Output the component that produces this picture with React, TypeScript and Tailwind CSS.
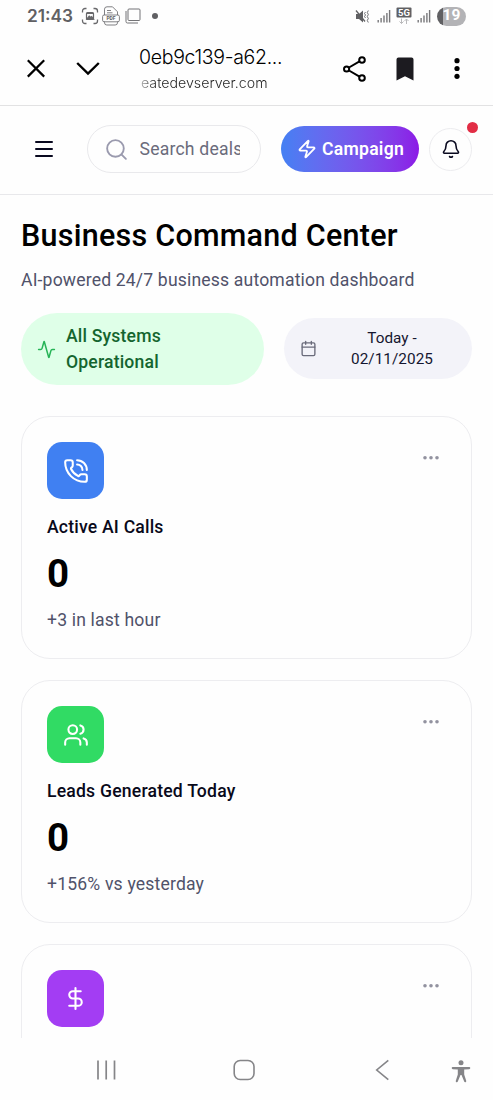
import type { ReactNode } from "react";
import { Activity, Bell, Calendar, DollarSign, Menu, PhoneCall, Search, Users, Zap } from "lucide-react";

type StatCardProps = {
    title?: string;
    value?: string;
    note?: string;
    color: string;
    icon: ReactNode;
};

function SignalBars() {
    return (
        <svg width="14" height="14" viewBox="0 0 14 14" stroke="#77777a" strokeWidth="1.4">
            <path d="M1.2 11v2.5M4.1 9v4.5M7 6.5v7M9.9 4v9.5M12.6 1v12.5" />
        </svg>
    );
}

function StatusBar() {
    return (
        <div className="flex h-8 shrink-0 items-center pl-[27px] pr-[27px] text-[#606063]">
            <span className="w-[46px] font-[Inter] text-[17.3px] font-semibold leading-none">21:43</span>
            <svg className="ml-2" width="18" height="18" viewBox="0 0 18 18" fill="none" stroke="#68686b" strokeWidth="1.3">
                <path d="M1.5 5.5V4a2.500 2.500 0 0 1 2.500-2.500h1.500M12.500 1.500H14A2.500 2.500 0 0 1 16.500 4v1.500M16.500 12.500V14a2.500 2.500 0 0 1-2.500 2.500h-1.500M5.500 16.500H4A2.500 2.500 0 0 1 1.500 14v-1.500" />
                <rect x="5.5" y="5.5" width="7" height="7" rx="1" strokeWidth="1.2" />
                <path d="M5.5 6.3h7M6 12l2.200-2.800 1.500 1.400 1-.9 1.800 2.300z" fill="#68686b" />
            </svg>
            <svg className="ml-[3px]" width="18" height="20" viewBox="0 0 18 20" fill="none" stroke="#737376" strokeWidth="0.9">
                <path d="M2.5 9V3.200A2.500 2.500 0 0 1 5 .8h5.500L15.500 5.800V9M2.500 15.500v1.200a2.300 2.300 0 0 0 2.300 2.300h8.400a2.300 2.300 0 0 0 2.300-2.300v-1.200M5 4.500h4M5 6.800h5.500" />
                <rect x="0.6" y="9" width="16.8" height="6.8" rx="1.5" />
                <text x="9" y="14.300" textAnchor="middle" fill="#606063" stroke="none" fontSize="5" fontWeight="700" fontFamily="Roboto">PDF</text>
            </svg>
            <svg className="ml-[5px]" width="16" height="16" viewBox="0 0 16 16" fill="none" stroke="#737376" strokeWidth="1">
                <rect x="3" y="1" width="12" height="11.500" rx="1" />
                <path d="M1 3v10.500a1.500 1.500 0 0 0 1.500 1.500H13" />
            </svg>
            <span className="ml-[11px] size-[5.500px] rounded-full bg-[#606063]" />
            <div className="ml-auto flex items-center">
                <svg width="15" height="15" viewBox="0 0 15 15" fill="none" stroke="#606063">
                    <path d="M1 5h3l4-3.500v12L4 10H1z" fill="#606063" stroke="none" />
                    <path d="M1 1.500l9 11" strokeWidth="1.300" />
                    <path d="M10.500 3l-1 1.500 1 1.500-1 1.500 1 1.500M13.300 1.500l-1 2 1 2-1 2 1 2-1 2 1 2" strokeWidth="0.900" />
                </svg>
                <div className="ml-[7px]"><SignalBars /></div>
                <svg className="ml-[5px]" width="16" height="18" viewBox="0 0 16 18">
                    <rect x="0.500" y="0.500" width="15" height="10" rx="1" fill="#606063" />
                    <text x="8" y="9" textAnchor="middle" fill="#fff" fontSize="9.500" fontWeight="700" fontFamily="Roboto">5G</text>
                    <path d="M5.500 11.500v5M3.500 14.500l2 2 2-2M10.500 17v-5M8.500 14l2-2 2 2" fill="none" stroke="#b9b9bb" />
                </svg>
                <div className="ml-[5px]"><SignalBars /></div>
                <div className="ml-[6px] flex h-[19px] w-[29px] items-center justify-center rounded-full bg-[linear-gradient(90deg,#606063_19%,#b3b3b6_19%)] text-[15.500px] font-bold leading-none text-white">
                    19
                </div>
            </div>
        </div>
    );
}

function BrowserBar() {
    return (
        <div className="flex h-[74px] shrink-0 items-center border-b border-[#e2e2e3] text-black">
            <svg className="ml-[26px]" width="20" height="20" viewBox="0 0 20 20" fill="none" stroke="currentColor" strokeWidth="2.2">
                <path d="M1.800 1.200l16.400 16.400M18.200 1.200L1.800 17.600" />
            </svg>
            <svg className="ml-[30px]" width="24" height="16" viewBox="0 0 24 16" fill="none" stroke="currentColor" strokeWidth="2.400">
                <path d="M1.200 2l10.800 10.500L22.800 2" />
            </svg>
            <div className="ml-[38px] w-[160px]">
                <div className="whitespace-nowrap pl-px font-[Inter] text-[19.500px] font-light leading-[26px] tracking-[-0.320px]">0eb9c139-a62...</div>
                <div className="mt-[3px] whitespace-nowrap bg-[linear-gradient(90deg,#ccc,#222_16px)] bg-clip-text pl-[3px] font-[Inter] text-[14.200px] font-light leading-5 text-transparent">
                    eatedevserver.com
                </div>
            </div>
            <svg className="ml-[44px]" width="26" height="26" viewBox="0 0 26 26" fill="none" stroke="currentColor" strokeWidth="2">
                <path d="M7 11.500l10.500-6.200M7 14.500l10.500 6.200" />
                <circle cx="4.600" cy="13" r="2.600" />
                <circle cx="20" cy="4" r="2.800" />
                <circle cx="20" cy="22" r="2.800" />
            </svg>
            <svg className="ml-[28px]" width="18" height="24" viewBox="0 0 18 24" fill="#1c1b20">
                <path d="M0.500 2.500a2 2 0 0 1 2-2h13a2 2 0 0 1 2 2V23.500l-8.500-4.300-8.500 4.300z" />
            </svg>
            <svg className="ml-[40px]" width="6" height="22" viewBox="0 0 6 22" fill="currentColor">
                <circle cx="3" cy="2.700" r="2.600" />
                <circle cx="3" cy="10.500" r="2.600" />
                <circle cx="3" cy="18.300" r="2.600" />
            </svg>
        </div>
    );
}

function Header() {
    return (
        <header className="flex h-[89px] shrink-0 items-center border-b border-[#e8e8eb] pb-[2px] pl-8 pr-[20px]">
            <Menu className="size-6 shrink-0 text-[#09091f]" strokeWidth={2} />
            <div className="ml-[31px] flex h-12 w-[174px] shrink-0 items-center rounded-full border border-[#e9e9ec] pl-4">
                <Search className="size-[25px] shrink-0 text-[#9a9aae]" strokeWidth={1.8} />
                <span className="ml-[10.500px] w-[100px] overflow-hidden whitespace-nowrap text-[17.600px] tracking-[0.2px] text-[#6a6b7b]">
                    Search deals
                </span>
            </div>
            <button className="ml-5 flex h-[46px] w-[138px] shrink-0 items-center rounded-full bg-linear-to-r from-[#4380f3] to-[#8c18e6] pl-4 text-white">
                <Zap className="size-[20px]" strokeWidth={2.200} />
                <span className="ml-[5px] text-[17.600px] font-semibold tracking-[0.250px]">Campaign</span>
            </button>
            <button className="relative ml-[10px] flex size-[43px] shrink-0 items-center justify-center rounded-full border border-[#ececef] text-[#09091f]">
                <Bell className="size-5" strokeWidth={1.900} />
                <span className="absolute -right-[7px] -top-[7px] size-[11px] rounded-full bg-[#e22d45]" />
            </button>
        </header>
    );
}

function StatCard({ title, value, note, color, icon }: StatCardProps) {
    return (
        <div className="h-[243px] shrink-0 rounded-[29px] border border-[#ededf0] px-[25px] pt-[25px]">
            <div className="flex items-start justify-between">
                <div className={`flex size-[57px] items-center justify-center rounded-[15px] text-white ${color}`}>{icon}</div>
                <svg className="mr-[6px] mt-[13px]" width="18" height="6" viewBox="0 0 18 6" fill="#92929f">
                    <circle cx="3" cy="2.800" r="1.800" />
                    <circle cx="9" cy="2.800" r="1.800" />
                    <circle cx="15" cy="2.800" r="1.800" />
                </svg>
            </div>
            <h3 className="mt-4 text-[17.600px] font-medium leading-6 tracking-[0.2px] text-[#09091a]">{title}</h3>
            <p className="mt-3 text-[38.500px] font-bold leading-[46px] text-black">{value}</p>
            <p className="mt-[11px] text-[17.600px] leading-6 tracking-[0.170px] text-[#50526a]">{note}</p>
        </div>
    );
}

function NavBar() {
    return (
        <nav className="flex h-[62px] shrink-0 items-center pt-[2px] text-[#858588]">
            <svg className="ml-24" width="20" height="22" viewBox="0 0 20 22" stroke="currentColor" strokeWidth="1.700">
                <path d="M2 1.500v19M10.200 1.500v19M18.500 1.500v19" />
            </svg>
            <svg className="ml-[117px]" width="22" height="22" viewBox="0 0 22 22" fill="none" stroke="currentColor" strokeWidth="1.600">
                <rect x="1.200" y="1.500" width="19.800" height="19" rx="6" />
            </svg>
            <svg className="ml-[120px]" width="14" height="22" viewBox="0 0 14 22" fill="none" stroke="currentColor" strokeWidth="1.600">
                <path d="M13.300 1.300L1.700 11l11.600 9.700" />
            </svg>
            <svg className="ml-[62px] mt-[3px]" width="20" height="23" viewBox="0 0 20 23" fill="currentColor">
                <circle cx="10" cy="2.700" r="2.500" />
                <path d="M1.800 7h16.400a1 1 0 0 1 0 2.200l-5 .4v5l2 6.200a1 1 0 0 1-2 .8L10.500 15h-1l-2.700 6.600a1 1 0 0 1-2-.8l2-6.200v-5l-5-.4a1 1 0 0 1 0-2.200z" />
            </svg>
        </nav>
    );
}

export default function App() {
    return (
        <div className="flex h-[1100px] w-[493px] flex-col overflow-hidden bg-[#fefefe] font-[Roboto,sans-serif]">
            <StatusBar />
            <BrowserBar />
            <Header />
            <main className="min-h-0 flex-1 overflow-hidden px-[21px]">
                <h1 className="mt-[22px] whitespace-nowrap text-[30.500px] font-medium leading-[38px] tracking-[0.250px] text-black">
                    Business Command Center
                </h1>
                <p className="mt-3 whitespace-nowrap text-[17.600px] leading-[26px] tracking-[0.160px] text-[#50526a]">
                    AI-powered 24/7 business automation dashboard
                </p>
                <div className="mt-5 flex items-center justify-between">
                    <div className="flex h-[72px] w-[243px] items-center rounded-full bg-[#dfffe8] pl-4">
                        <Activity className="size-[19px] text-[#27b457]" strokeWidth={1.900} />
                        <span className="ml-[10px] w-[120px] pt-px text-[17.600px] font-medium leading-[25.500px] tracking-[0.170px] text-[#14652f]">
                            All Systems Operational
                        </span>
                    </div>
                    <button className="mb-px flex h-[61px] w-[188px] items-center rounded-full bg-[#f3f3f9] pl-4 pr-[19px]">
                        <Calendar className="size-[17px] shrink-0 text-[#6a6b7b]" strokeWidth={1.900} />
                        <span className="ml-8 w-[86px] text-center text-[15.300px] leading-[21px] tracking-[0.050px] text-[#151630]">
                            Today - 02/11/2025
                        </span>
                    </button>
                </div>
                <div className="mt-[31px] flex flex-col gap-[21px]">
                    <StatCard
                        title="Active AI Calls"
                        value="0"
                        note="+3 in last hour"
                        color="bg-[#4080f2]"
                        icon={<PhoneCall className="size-[26px]" strokeWidth={1.900} />}
                    />
                    <StatCard
                        title="Leads Generated Today"
                        value="0"
                        note="+156% vs yesterday"
                        color="bg-[#31db64]"
                        icon={<Users className="size-[26px]" strokeWidth={1.900} />}
                    />
                    <StatCard color="bg-[#a33df3]" icon={<DollarSign className="size-[25px]" strokeWidth={2} />} />
                </div>
            </main>
            <NavBar />
        </div>
    );
}
